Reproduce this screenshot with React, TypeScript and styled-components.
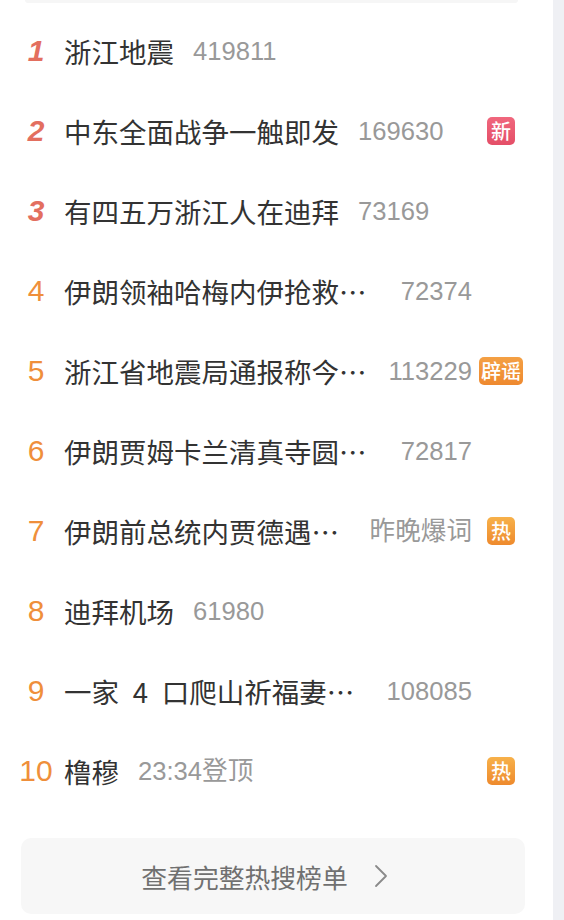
import React from 'react';
import styled, { createGlobalStyle } from 'styled-components';

const GlobalStyle = createGlobalStyle`
  html, body {
    margin: 0;
    padding: 0;
    background: #ffffff;
  }
  body {
    font-family: "Noto Sans CJK SC", "Liberation Sans", sans-serif;
    -webkit-font-smoothing: antialiased;
  }
`;

const Page = styled.div`
  display: grid;
  grid-template-columns: 553px 11px;
  width: 564px;
  min-height: 920px;
  overflow: hidden;
`;

const Main = styled.main`
  display: flex;
  flex-direction: column;
  background: #ffffff;
`;

const SideStrip = styled.div`
  background: #eff0f4;
`;

const TopCardEdge = styled.div`
  height: 3px;
  margin: 0 35px 0 25px;
  background: #f6f6f6;
  border-radius: 0 0 10px 10px;
`;

const List = styled.ul`
  list-style: none;
  margin: 8px 0 0;
  padding: 0;
`;

const Row = styled.li`
  display: flex;
  align-items: center;
  height: 80px;
  padding: 0 27px 0 16px;
`;

const Rank = styled.span<{ $top: boolean }>`
  flex: 0 0 40px;
  text-align: center;
  font-family: "Liberation Sans", Arial, sans-serif;
  font-size: 30px;
  line-height: 1;
  font-weight: ${({ $top }) => ($top ? 700 : 400)};
  font-style: ${({ $top }) => ($top ? 'italic' : 'normal')};
  color: ${({ $top }) => ($top ? '#e36f5f' : '#ef8f3b')};
  margin-right: 8px;
`;

const Title = styled.span`
  flex: 0 1 auto;
  min-width: 0;
  overflow: hidden;
  white-space: nowrap;
  text-overflow: ellipsis;
  font-family: "Noto Sans CJK SC", sans-serif;
  font-size: 27.5px;
  line-height: 38px;
  color: #333333;
`;

const Count = styled.span`
  flex-shrink: 0;
  margin-left: 19px;
  font-family: "Liberation Sans", "Noto Sans CJK SC", sans-serif;
  font-size: 25.6px;
  line-height: 38px;
  color: #999999;
`;

const Spacer = styled.span`
  flex: 1 1 0;
`;

const BadgeSlot = styled.span`
  flex: 0 0 50px;
  margin-left: 4px;
  display: flex;
  justify-content: center;
`;

const badgeColors: Record<string, string> = {
  new: 'linear-gradient(180deg, #f0677d 0%, #e44e67 100%)',
  hot: 'linear-gradient(180deg, #f7b14a 0%, #ee8a2d 100%)',
  rumor: 'linear-gradient(180deg, #f4a044 0%, #ee892f 100%)',
};

const Badge = styled.span<{ $kind: string }>`
  display: inline-flex;
  align-items: center;
  justify-content: center;
  height: 28px;
  min-width: 28px;
  padding: 0 2px;
  box-sizing: border-box;
  border-radius: 5px;
  background: ${({ $kind }) => badgeColors[$kind]};
  color: #ffffff;
  font-family: "Noto Sans CJK SC", sans-serif;
  font-size: 20px;
  font-weight: 500;
  line-height: 1;
`;

const MoreButton = styled.button`
  display: flex;
  align-items: center;
  justify-content: center;
  gap: 25px;
  width: 504px;
  height: 76px;
  margin: 27px 0 0 21px;
  padding: 0 16px 0 0;
  border: none;
  border-radius: 10px;
  background: #f7f7f7;
  color: #707070;
  font-family: "Noto Sans CJK SC", sans-serif;
  font-size: 25.8px;
  cursor: pointer;
`;

const Chevron = styled.svg`
  width: 16px;
  height: 28px;
`;

type Item = {
  title: string;
  count: string;
  badge?: { kind: string; label: string };
};

const items: Item[] = [
  { title: '浙江地震', count: '419811' },
  { title: '中东全面战争一触即发', count: '169630', badge: { kind: 'new', label: '新' } },
  { title: '有四五万浙江人在迪拜', count: '73169' },
  { title: '伊朗领袖哈梅内伊抢救画面', count: '72374' },
  { title: '浙江省地震局通报称今晨地震', count: '113229', badge: { kind: 'rumor', label: '辟谣' } },
  { title: '伊朗贾姆卡兰清真寺圆顶升起红旗', count: '72817' },
  { title: '伊朗前总统内贾德遇袭身亡', count: '昨晚爆词', badge: { kind: 'hot', label: '热' } },
  { title: '迪拜机场', count: '61980' },
  { title: '一家\u20024\u2002口爬山祈福妻子遇险', count: '108085' },
  { title: '橹穆', count: '23:34登顶', badge: { kind: 'hot', label: '热' } },
];

const App: React.FC = () => {
  return (
    <>
      <GlobalStyle />
      <Page>
        <Main>
          <TopCardEdge />
          <List>
            {items.map((item, i) => (
              <Row key={i}>
                <Rank $top={i < 3}>{i + 1}</Rank>
                <Title>{item.title}</Title>
                <Count>{item.count}</Count>
                <Spacer />
                <BadgeSlot>
                  {item.badge && <Badge $kind={item.badge.kind}>{item.badge.label}</Badge>}
                </BadgeSlot>
              </Row>
            ))}
          </List>
          <MoreButton type="button">
            <span>查看完整热搜榜单</span>
            <Chevron viewBox="0 0 16 28" fill="none">
              <path d="M3 4 L13 14 L3 24" stroke="#8a8a8a" strokeWidth="1.8" strokeLinecap="round" strokeLinejoin="round" />
            </Chevron>
          </MoreButton>
        </Main>
        <SideStrip />
      </Page>
    </>
  );
};

export default App;
